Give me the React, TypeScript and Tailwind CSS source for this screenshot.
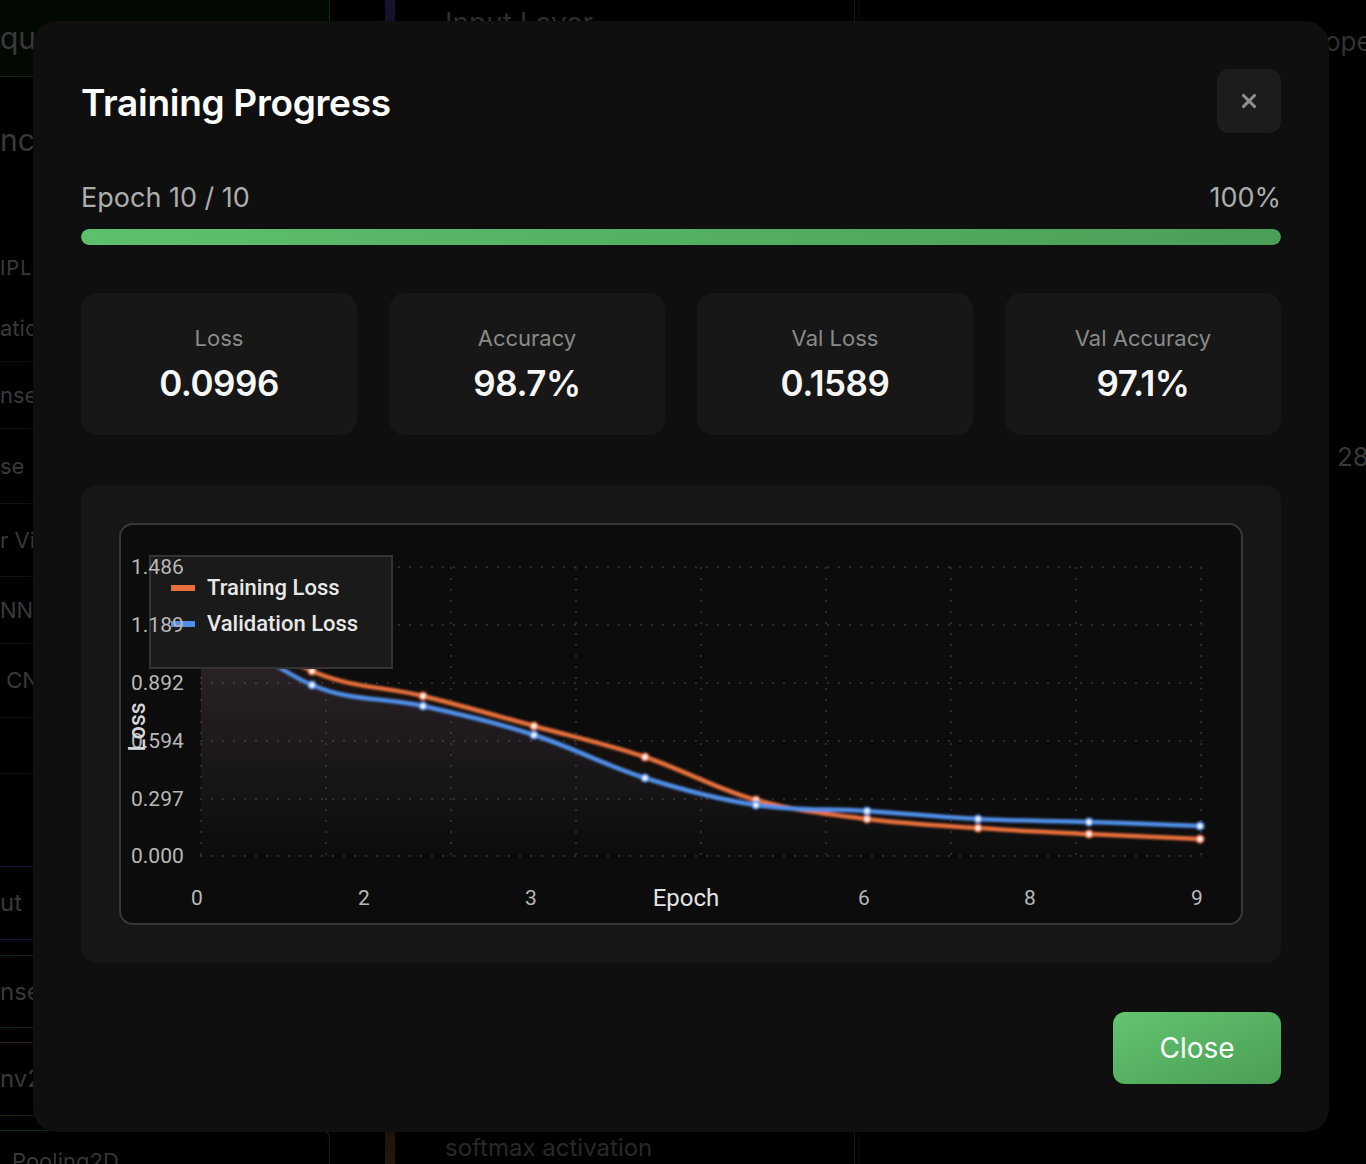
import { X } from 'lucide-react';

type Pt = [number, number];

const xs = Array.from({ length: 10 }, (_, i) => 201 + 111 * i);
const trainY = [600, 672, 697, 727, 758, 801, 820, 829, 835, 840];
const valY = [612, 686, 707, 736, 779, 806, 812, 820, 823, 827];

const trainPts: Pt[] = xs.map((x, i) => [x, trainY[i]]);
const valPts: Pt[] = xs.map((x, i) => [x, valY[i]]);

function smoothPath(pts: Pt[]) {
  let d = `M${pts[0][0]},${pts[0][1]}`;
  for (let i = 0; i < pts.length - 1; i++) {
    const p0 = pts[i - 1] || pts[i];
    const p1 = pts[i];
    const p2 = pts[i + 1];
    const p3 = pts[i + 2] || p2;
    const t = 0.18;
    const c1x = p1[0] + (p2[0] - p0[0]) * t;
    const c1y = p1[1] + (p2[1] - p0[1]) * t;
    const c2x = p2[0] - (p3[0] - p1[0]) * t;
    const c2y = p2[1] - (p3[1] - p1[1]) * t;
    d += ` C${c1x},${c1y} ${c2x},${c2y} ${p2[0]},${p2[1]}`;
  }
  return d;
}

const stats = [
  { label: 'Loss', value: '0.0996' },
  { label: 'Accuracy', value: '98.7%' },
  { label: 'Val Loss', value: '0.1589' },
  { label: 'Val Accuracy', value: '97.1%' },
];

const yTicks = [
  { v: '1.486', y: 568 },
  { v: '1.189', y: 626 },
  { v: '0.892', y: 684 },
  { v: '0.594', y: 742 },
  { v: '0.297', y: 800 },
  { v: '0.000', y: 857 },
];

const xTicks = [
  { v: '0', x: 197 },
  { v: '2', x: 364 },
  { v: '3', x: 531 },
  { v: '6', x: 864 },
  { v: '8', x: 1030 },
  { v: '9', x: 1197 },
];

const chartFont = "Roboto, 'Liberation Sans', sans-serif";

function LossChart() {
  const trainLine = smoothPath(trainPts);
  const valLine = smoothPath(valPts);
  const area = (line: string) => `${line} L1200,857 L201,857 Z`;
  const vGrid = Array.from({ length: 9 }, (_, i) => 201 + 125 * i);

  return (
    <svg viewBox="122 526 1118 398" className="block h-full w-full">
      <defs>
        <linearGradient id="valFill" x1="0" y1="0" x2="0" y2="1">
          <stop offset="0" stopColor="#7a86d8" stopOpacity="0.16" />
          <stop offset="1" stopColor="#7a86d8" stopOpacity="0" />
        </linearGradient>
        <linearGradient id="trainFill" x1="0" y1="0" x2="0" y2="1">
          <stop offset="0" stopColor="#e8703a" stopOpacity="0.1" />
          <stop offset="1" stopColor="#e8703a" stopOpacity="0" />
        </linearGradient>
        <filter id="glow" x="-10%" y="-10%" width="120%" height="120%">
          <feGaussianBlur stdDeviation="0.8" />
        </filter>
      </defs>

      {yTicks.map((t) => (
        <line key={t.v} x1={200} x2={1202} y1={t.y} y2={t.y} stroke="#2b2b2b" strokeWidth={2} strokeDasharray="2 9" />
      ))}
      {vGrid.map((x) => (
        <line key={x} x1={x} x2={x} y1={568} y2={857} stroke="#2b2b2b" strokeWidth={2} strokeDasharray="2 9" />
      ))}

      <path d={area(valLine)} fill="url(#valFill)" />
      <path d={area(trainLine)} fill="url(#trainFill)" />

      <g filter="url(#glow)">
        <path d={trainLine} fill="none" stroke="#e8703a" strokeWidth={4.5} strokeLinejoin="round" />
        <path d={valLine} fill="none" stroke="#4f8fe8" strokeWidth={4.5} strokeLinejoin="round" />
        {trainPts.map(([x, y]) => (
          <circle key={`t${x}`} cx={x} cy={y} r={3.6} fill="#fff4ee" stroke="#e8703a" strokeWidth={2} />
        ))}
        {valPts.map(([x, y]) => (
          <circle key={`v${x}`} cx={x} cy={y} r={3.6} fill="#eef5ff" stroke="#4f8fe8" strokeWidth={2} />
        ))}
      </g>

      <rect x={150} y={557} width={242} height={112} fill="#1a1a1a" stroke="#343434" strokeWidth={2} />
      <rect x={171} y={586} width={24} height={6} fill="#e8703a" />
      <rect x={171} y={622} width={24} height={6} fill="#4f8fe8" />
      <g fontFamily={chartFont} fontSize={22} fontWeight={500} fill="#e8e8e8">
        <text x={207} y={596}>Training Loss</text>
        <text x={207} y={632}>Validation Loss</text>
      </g>

      <g fontFamily={chartFont} fill="#b8b8b8" fontSize={21}>
        {yTicks.map((t) => (
          <text key={t.v} x={131} y={t.y + 7}>
            {t.v}
          </text>
        ))}
        {xTicks.map((t) => (
          <text key={t.v} x={t.x} y={906} textAnchor="middle">
            {t.v}
          </text>
        ))}
      </g>
      <text x={686} y={907} textAnchor="middle" fontFamily={chartFont} fontSize={24} fill="#e2e2e2">
        Epoch
      </text>
      <text
        x={0}
        y={0}
        transform="translate(145 728) rotate(-90)"
        textAnchor="middle"
        fontFamily={chartFont}
        fontSize={23}
        fontWeight={500}
        fill="#d6d6d6"
      >
        Loss
      </text>
    </svg>
  );
}

function Background() {
  const row = 'flex shrink-0 items-center whitespace-nowrap';
  return (
    <div className="flex h-full font-['Inter',sans-serif] text-[#3b3b3b]">
      <aside className="flex w-[330px] shrink-0 flex-col overflow-hidden">
        <div className={`${row} h-[77px] border-r border-b border-[#0f2e14] bg-[#030a04] text-[30px]`}>quential Model</div>
        <div className={`${row} mt-[23px] h-[80px] text-[30px]`}>ncoder</div>
        <div className={`${row} mt-[60px] h-[56px] text-[20px] tracking-wider`}>IPLES</div>
        <div className={`${row} h-[66px] border-b border-[#121212] text-[22px]`}>ation</div>
        <div className={`${row} h-[67px] border-b border-[#121212] text-[22px]`}>nse</div>
        <div className={`${row} h-[75px] border-b border-[#121212] text-[22px]`}>se</div>
        <div className={`${row} h-[73px] border-b border-[#121212] text-[22px]`}>r Vision</div>
        <div className={`${row} h-[67px] border-b border-[#121212] text-[22px]`}>NN</div>
        <div className={`${row} h-[74px] border-b border-[#121212] text-[22px]`}>&nbsp;CNN</div>
        <div className="h-[56px] shrink-0 border-b border-[#121212]" />
        <div className={`${row} mt-[92px] h-[74px] border-y border-[#1b1638] text-[24px]`}>ut</div>
        <div className={`${row} mt-[15px] h-[73px] border-y border-[#102a16] text-[24px]`}>nse</div>
        <div className={`${row} mt-[14px] h-[74px] border-y border-[#2a1d0c] text-[24px]`}>nv2D</div>
        <div className="mt-[14px] h-[60px] shrink-0 rounded-tr-lg border-t border-r border-[#0c2a2e] pt-[14px] pl-[12px] text-[22px] whitespace-nowrap">
          Pooling2D
        </div>
      </aside>
      <main className="flex flex-1 flex-col justify-between pl-[55px]">
        <div className="flex h-[40px] w-[470px] border-r border-[#16122b]">
          <div className="w-[10px] bg-[#16122e]" />
          <div className="pl-[50px] pt-[2px] text-[28px] text-[#2f2f2f]">Input Layer</div>
        </div>
        <div className="flex h-[40px] w-[470px] border-r border-[#2a1d0c]">
          <div className="w-[10px] bg-[#24190a]" />
          <div className="pl-[50px] pt-[8px] text-[24px] leading-[32px] text-[#2e2e2e]">softmax activation</div>
        </div>
      </main>
      <section className="flex w-[508px] shrink-0 flex-col overflow-hidden border-l border-[#0a0a0a] pl-[440px]">
        <div className="mt-[22px] text-[26px] whitespace-nowrap text-[#333]">Properties</div>
        <div className="mt-[376px] pl-[38px] text-[26px] whitespace-nowrap text-[#3a3a3a]">28 × 28</div>
      </section>
    </div>
  );
}

export default function App() {
  return (
    <div className="relative h-[1164px] w-[1366px] overflow-hidden bg-black">
      <Background />

      <div className="absolute inset-0 flex items-start pt-[21px] pl-[33px]">
        <div className="w-[1296px] rounded-[24px] bg-[#0f0f0f] p-[48px] font-['Inter',sans-serif] text-white shadow-2xl">
          <div className="flex items-center justify-between">
            <h2 className="mt-[4px] text-[37px] font-semibold tracking-[-0.3px] text-white">Training Progress</h2>
            <button className="flex h-16 w-16 items-center justify-center rounded-xl bg-[#1c1c1c] text-[#8e8e8e]">
              <X size={22} strokeWidth={3.4} />
            </button>
          </div>

          <div className="mt-[46px] flex items-center justify-between text-[27px] leading-[38px] text-[#adadad]">
            <span>Epoch 10 / 10</span>
            <span>100%</span>
          </div>
          <div className="mt-[12px] h-4 w-full overflow-hidden rounded-full bg-[#1f1f1f]">
            <div className="h-full w-full rounded-full bg-gradient-to-r from-[#5dc06c] to-[#4a9f56]" />
          </div>

          <div className="mt-[48px] grid grid-cols-4 gap-8">
            {stats.map((s) => (
              <div key={s.label} className="flex h-[142px] flex-col items-center justify-center rounded-2xl bg-[#171717]">
                <span className="text-[22px] leading-[28px] text-[#8a8a8a]">{s.label}</span>
                <span className="mt-[9px] text-[35px] leading-[44px] font-semibold tracking-[-0.5px] text-[#f6f6f6]">
                  {s.value}
                </span>
              </div>
            ))}
          </div>

          <div className="mt-[50px] rounded-2xl bg-[#161616] p-[38px]">
            <div className="h-[402px] overflow-hidden rounded-[14px] border-2 border-[#383838] bg-[#0c0c0c]">
              <LossChart />
            </div>
          </div>

          <div className="mt-[49px] flex justify-end">
            <button className="h-[72px] w-[168px] rounded-xl bg-gradient-to-br from-[#63c56f] to-[#4a9e55] text-[28px] text-white">
              Close
            </button>
          </div>
        </div>
      </div>
    </div>
  );
}
